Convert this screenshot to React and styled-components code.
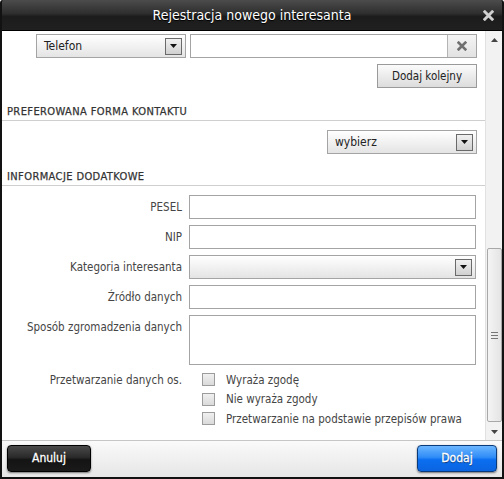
import React from 'react';
import styled, { createGlobalStyle } from 'styled-components';

const GlobalStyle = createGlobalStyle`
  html, body { margin: 0; padding: 0; background: #fff; }
  body { font-family: "DejaVu Sans Condensed", "DejaVu Sans", sans-serif; }
  * { box-sizing: border-box; }
`;

const Window = styled.div`
  width: 504px;
  height: 479px;
  display: flex;
  flex-direction: column;
  background: #161616;
  border: 2px solid #121212;
  border-top: 0;
  border-radius: 3px 3px 0 0;
  overflow: hidden;
`;

const TitleBar = styled.div`
  height: 31px;
  flex: none;
  display: grid;
  grid-template-columns: 30px 1fr 30px;
  align-items: center;
  background: linear-gradient(#4c4c4c 0%, #2e2e2e 45%, #1c1c1c 55%, #202020 100%);
  border-bottom: 1px solid #000;
`;

const Title = styled.div`
  grid-column: 2;
  text-align: center;
  color: #fff;
  font-size: 14px;
  text-shadow: 0 1px 1px #000;
`;

const CloseButton = styled.div`
  grid-column: 3;
  display: flex;
  justify-content: center;
  padding-left: 2px;
`;

const Body = styled.div`
  flex: 1;
  display: flex;
  background: #fff;
  min-height: 0;
`;

const Content = styled.div`
  flex: 1;
  padding: 3px 8px 0 5px;
  display: flex;
  flex-direction: column;
  color: #444;
  font-size: 11px;
`;

const Scrollbar = styled.div`
  width: 18px;
  flex: none;
  display: flex;
  flex-direction: column;
  align-items: center;
  background: #f2f2f2;
  border-left: 1px solid #e2e2e2;
`;

const Arrow = styled.div`
  height: 17px;
  width: 100%;
  display: flex;
  align-items: center;
  justify-content: center;
  flex: none;
`;

const Track = styled.div`
  flex: 1;
  width: 100%;
  display: flex;
  flex-direction: column;
  padding: 0 1px;
`;

const Thumb = styled.div`
  margin-top: ${(p) => p.$top}px;
  height: ${(p) => p.$height}px;
  border: 1px solid #a8a8a8;
  border-radius: 2px;
  background: linear-gradient(90deg, #f4f4f4, #e4e4e4);
  display: flex;
  align-items: center;
  justify-content: center;
`;

const Grip = styled.div`
  width: 7px;
  height: 7px;
  background: repeating-linear-gradient(#777 0 1px, transparent 1px 3px);
`;

const Row = styled.div`
  display: flex;
  align-items: ${(p) => (p.$top ? 'flex-start' : 'center')};
  gap: 7px;
  margin-top: ${(p) => p.$mt || 0}px;
  justify-content: ${(p) => (p.$end ? 'flex-end' : 'flex-start')};
  padding-left: ${(p) => p.$pl || 0}px;
`;

const Label = styled.div`
  width: 175px;
  text-align: right;
  color: #454545;
  font-size: 11.5px;
  padding-top: ${(p) => p.$pt || 0}px;
  flex: none;
`;

const Input = styled.div`
  width: 287px;
  height: ${(p) => p.$h || 24}px;
  border: 1px solid #a4a4a4;
  background: #fff;
  display: flex;
  justify-content: flex-end;
`;

const ClearButton = styled.div`
  width: 29px;
  height: 100%;
  border-left: 1px solid #b4b4b4;
  background: linear-gradient(#f4f4f4, #e2e2e2);
  display: flex;
  align-items: center;
  justify-content: center;
`;

const Select = styled.div`
  width: ${(p) => p.$w}px;
  height: 24px;
  border: 1px solid #a4a4a4;
  background: linear-gradient(#ffffff, #e4e4e4);
  display: flex;
  align-items: center;
  justify-content: space-between;
  padding: 0 3px 0 7px;
  color: #222;
  font-size: 12px;
`;

const DropBox = styled.div`
  width: 17px;
  height: 17px;
  border: 1px solid #6a6a6a;
  background: linear-gradient(#f0f0f0, #d0d0d0);
  display: flex;
  align-items: center;
  justify-content: center;
`;

const Button = styled.div`
  width: 100px;
  height: 24px;
  border: 1px solid #9a9a9a;
  background: linear-gradient(#fbfbfb, #dcdcdc);
  display: flex;
  align-items: center;
  justify-content: center;
  color: #222;
  font-size: 11.5px;
`;

const SectionHeader = styled.div`
  margin: ${(p) => p.$mt}px -8px 0 -5px;
  padding: 0 0 2px 5px;
  line-height: 13px;
  border-bottom: 1px solid #cfcfcf;
  color: #333;
  font-size: 11px;
  letter-spacing: 0.4px;
  -webkit-text-stroke: 0.25px #333;
`;

const Checks = styled.div`
  display: flex;
  flex-direction: column;
  gap: 6px;
  padding-left: 13px;
`;

const Check = styled.div`
  display: flex;
  align-items: center;
  gap: 11px;
  font-size: 11.5px;
  color: #454545;
  height: 13.5px;
`;

const Box = styled.span`
  width: 13px;
  height: 13px;
  border: 1px solid #9c9c9c;
  background: linear-gradient(#f0f0f0, #dadada);
  flex: none;
`;

const Footer = styled.div`
  height: 37px;
  flex: none;
  border-top: 1px solid #c6c6c6;
  background: linear-gradient(#fafafa, #e6e6e6);
  display: flex;
  align-items: center;
  justify-content: space-between;
  padding: 0 5px 2px 5px;
`;

const FooterButton = styled.div`
  width: ${(p) => p.$w}px;
  height: 27px;
  border-radius: 4px;
  border: 1px solid ${(p) => (p.$primary ? '#0a3a7a' : '#000')};
  background: ${(p) =>
    p.$primary
      ? 'linear-gradient(#6cb6ff 0%, #2f8cf7 45%, #0b6ef0 55%, #0a64e0 100%)'
      : 'linear-gradient(#4a4a4a 0%, #2a2a2a 45%, #141414 55%, #1a1a1a 100%)'};
  box-shadow: 0 1px 2px rgba(0, 0, 0, 0.5);
  color: #fff;
  font-size: 12px;
  -webkit-text-stroke: 0.3px #fff;
  display: flex;
  align-items: center;
  justify-content: center;
  text-shadow: 0 1px 1px rgba(0, 0, 0, 0.6);
`;

const DropArrow = () => (
  <DropBox>
    <svg width="7" height="4" viewBox="0 0 7 4">
      <path d="M0 0h7L3.5 4z" fill="#111" />
    </svg>
  </DropBox>
);

const XIcon = ({ color, size }) => (
  <svg width={size} height={size} viewBox="0 0 12 12">
    <path d="M2 2L10 10M10 2L2 10" stroke={color} strokeWidth="3.2" strokeLinecap="square" />
  </svg>
);

const TriIcon = ({ up }) => (
  <svg width="7" height="4" viewBox="0 0 7 4">
    <path d={up ? 'M0 4h7L3.5 0z' : 'M0 0h7L3.5 4z'} fill="#444" />
  </svg>
);

const fields = [
  { label: 'PESEL' },
  { label: 'NIP' },
  { label: 'Kategoria interesanta', select: true },
  { label: 'Źródło danych' },
];

const consents = ['Wyraża zgodę', 'Nie wyraża zgody', 'Przetwarzanie na podstawie przepisów prawa'];

export default function App() {
  return (
    <>
      <GlobalStyle />
      <Window>
        <TitleBar>
          <Title>Rejestracja nowego interesanta</Title>
          <CloseButton>
            <XIcon color="#d0d0d0" size={11} />
          </CloseButton>
        </TitleBar>
        <Body>
          <Content>
            <Row $pl={29} style={{ gap: 4 }}>
              <Select $w={150}>
                <span>Telefon</span>
                <DropArrow />
              </Select>
              <Input>
                <ClearButton>
                  <XIcon color="#707070" size={10} />
                </ClearButton>
              </Input>
            </Row>
            <Row $end $mt={6}>
              <Button>Dodaj kolejny</Button>
            </Row>
            <SectionHeader $mt={17}>PREFEROWANA FORMA KONTAKTU</SectionHeader>
            <Row $end $mt={9}>
              <Select $w={150}>
                <span>wybierz</span>
                <DropArrow />
              </Select>
            </Row>
            <SectionHeader $mt={16}>INFORMACJE DODATKOWE</SectionHeader>
            {fields.map((f, i) => (
              <Row key={f.label} $mt={i === 0 ? 9 : 6}>
                <Label>{f.label}</Label>
                {f.select ? (
                  <Select $w={287}>
                    <span />
                    <DropArrow />
                  </Select>
                ) : (
                  <Input />
                )}
              </Row>
            ))}
            <Row $top $mt={6}>
              <Label $pt={5}>Sposób zgromadzenia danych</Label>
              <Input $h={50} />
            </Row>
            <Row $top $mt={8}>
              <Label>Przetwarzanie danych os.</Label>
              <Checks>
                {consents.map((c) => (
                  <Check key={c}>
                    <Box />
                    {c}
                  </Check>
                ))}
              </Checks>
            </Row>
          </Content>
          <Scrollbar>
            <Arrow>
              <TriIcon up />
            </Arrow>
            <Track>
              <Thumb $top={200} $height={174}>
                <Grip />
              </Thumb>
            </Track>
            <Arrow>
              <TriIcon />
            </Arrow>
          </Scrollbar>
        </Body>
        <Footer>
          <FooterButton $w={84}>Anuluj</FooterButton>
          <FooterButton $w={80} $primary>
            Dodaj
          </FooterButton>
        </Footer>
      </Window>
    </>
  );
}
